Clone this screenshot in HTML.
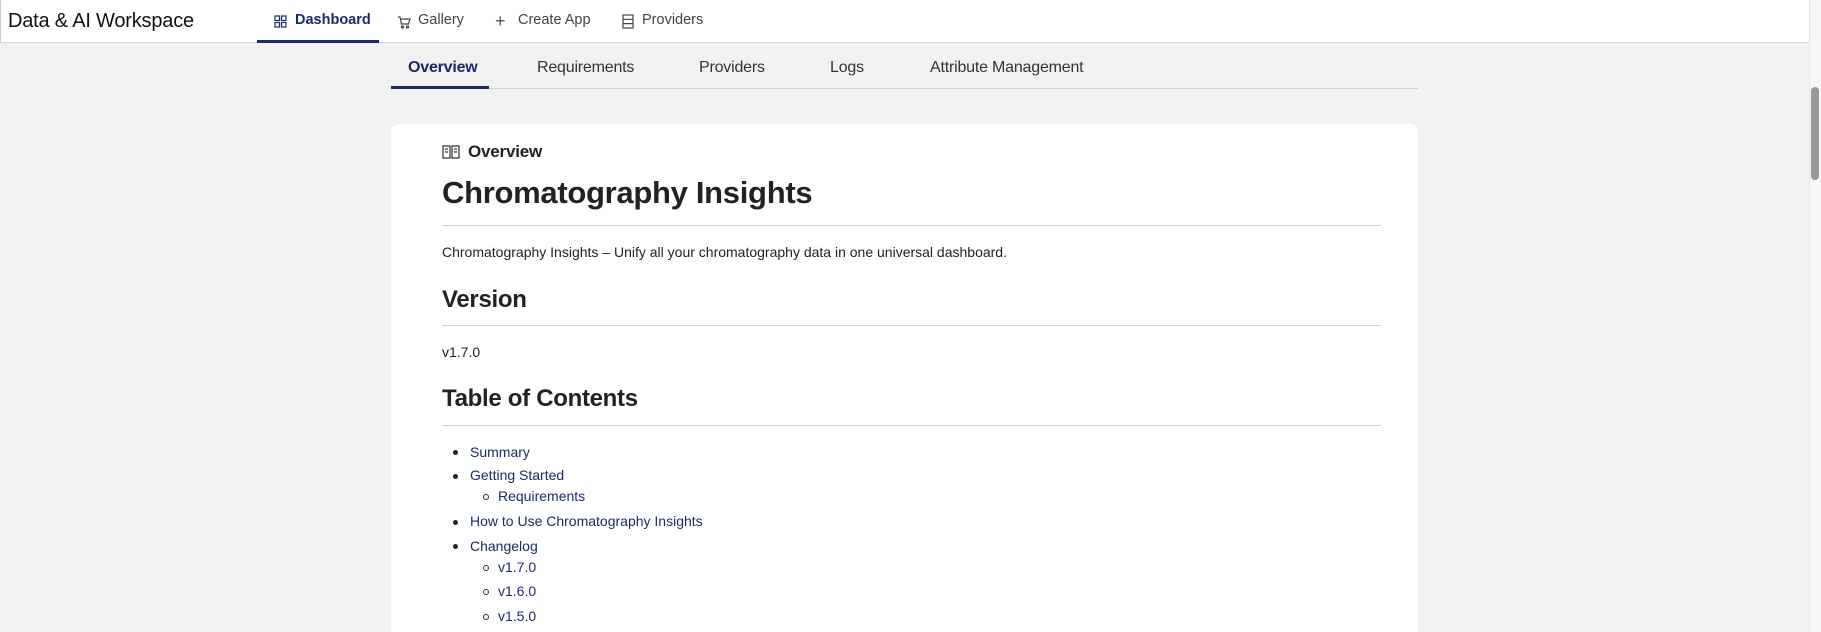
<!DOCTYPE html>
<html><head><meta charset="utf-8"><style>
*{margin:0;padding:0;box-sizing:border-box}
html,body{width:1821px;height:632px;overflow:hidden}
body{background:#f2f2f2;font-family:"Liberation Sans",Arial,sans-serif;color:#222;position:relative}
.a{position:absolute;white-space:nowrap}
#hdr{position:absolute;left:0;top:0;width:1809px;height:43px;background:#fff;border-bottom:1px solid #d6d6d6;border-left:1px solid #ccc}
.nav{font-size:14.5px;color:#444;top:12px}
.tab{font-size:16px;color:#333;top:59px;letter-spacing:-0.2px}
.li{font-size:14px;color:#1b2a6b}
.b{position:absolute;width:5px;height:5px;border-radius:50%;background:#222}
.c{position:absolute;width:6px;height:6px;border-radius:50%;border:1px solid #333}
.hr{position:absolute;left:442px;width:939px;height:1px;background:#d0d0d0}
</style></head><body>
<div id="hdr"></div>
<div class="a" style="left:8px;top:10px;font-size:20px;color:#111;letter-spacing:-0.2px">Data &amp; AI Workspace</div>
<svg class="a" style="left:274px;top:15px" width="13" height="13" viewBox="0 0 13 13" fill="none" stroke="#1b2a6b" stroke-width="1.2"><rect x="1" y="1" width="4.5" height="4.5"/><rect x="7.5" y="1" width="4.5" height="4.5"/><rect x="1" y="7.5" width="4.5" height="4.5"/><rect x="7.5" y="7.5" width="4.5" height="4.5"/></svg>
<div class="a nav" style="left:295px;color:#1b2a6b;font-weight:bold">Dashboard</div>
<div class="a" style="left:257px;top:40px;width:122px;height:3px;background:#1b2a6b"></div>
<svg class="a" style="left:397px;top:15px" width="14" height="14" viewBox="0 0 14 14" fill="none" stroke="#444" stroke-width="1.2"><path d="M1 2h2l1.5 7h7l1.5-5H4"/><circle cx="5.5" cy="12" r="1"/><circle cx="10.5" cy="12" r="1"/></svg>
<div class="a nav" style="left:418px">Gallery</div>
<div class="a" style="left:495px;top:11px;font-size:18px;color:#555">+</div>
<div class="a nav" style="left:518px">Create App</div>
<svg class="a" style="left:622px;top:14px" width="12" height="15" viewBox="0 0 12 15" fill="none" stroke="#444" stroke-width="1.2"><rect x="1" y="1" width="10" height="13"/><path d="M1 5.3h10M1 9.6h10"/></svg>
<div class="a nav" style="left:642px">Providers</div>

<div class="a tab" style="left:408px;color:#1b2a6b;font-weight:bold">Overview</div>
<div class="a tab" style="left:537px">Requirements</div>
<div class="a tab" style="left:699px">Providers</div>
<div class="a tab" style="left:830px">Logs</div>
<div class="a tab" style="left:930px">Attribute Management</div>
<div class="a" style="left:391px;top:88px;width:1027px;height:1px;background:#d0d0d0"></div>
<div class="a" style="left:391px;top:86px;width:98px;height:3px;background:#1b2a6b"></div>

<div class="a" style="left:391px;top:124px;width:1027px;height:520px;background:#fff;border-radius:8px"></div>
<svg class="a" style="left:442px;top:145px" width="18" height="14" viewBox="0 0 18 14" fill="none" stroke="#333" stroke-width="1.2"><path d="M1 1h7v12H1zM10 1h7v12h-7zM3 4h3M3 7h3M12 4h3M12 7h3"/></svg>
<div class="a" style="left:468px;top:142px;font-size:17px;font-weight:bold;color:#222;letter-spacing:-0.2px">Overview</div>
<div class="a" style="left:442px;top:175px;font-size:31px;font-weight:bold;color:#222;letter-spacing:-0.3px">Chromatography Insights</div>
<div class="hr" style="top:225px"></div>
<div class="a" style="left:442px;top:244px;font-size:14px">Chromatography Insights – Unify all your chromatography data in one universal dashboard.</div>
<div class="a" style="left:442px;top:286px;font-size:24px;font-weight:bold;letter-spacing:-0.3px">Version</div>
<div class="hr" style="top:325px"></div>
<div class="a" style="left:442px;top:344px;font-size:14px">v1.7.0</div>
<div class="a" style="left:442px;top:385px;font-size:24px;font-weight:bold;letter-spacing:-0.3px">Table of Contents</div>
<div class="hr" style="top:425px"></div>

<div class="b" style="left:453px;top:450px"></div><div class="a li" style="left:470px;top:444px">Summary</div>
<div class="b" style="left:453px;top:474px"></div><div class="a li" style="left:470px;top:467px">Getting Started</div>
<div class="c" style="left:483px;top:494px"></div><div class="a li" style="left:498px;top:488px">Requirements</div>
<div class="b" style="left:453px;top:520px"></div><div class="a li" style="left:470px;top:513px">How to Use Chromatography Insights</div>
<div class="b" style="left:453px;top:544px"></div><div class="a li" style="left:470px;top:538px">Changelog</div>
<div class="c" style="left:483px;top:565px"></div><div class="a li" style="left:498px;top:559px">v1.7.0</div>
<div class="c" style="left:483px;top:589px"></div><div class="a li" style="left:498px;top:583px">v1.6.0</div>
<div class="c" style="left:483px;top:614px"></div><div class="a li" style="left:498px;top:608px">v1.5.0</div>

<div class="a" style="left:1809px;top:0;width:12px;height:632px;background:#f6f6f6;border-left:1px solid #e4e4e4"></div>
<div class="a" style="left:1811px;top:87px;width:8px;height:93px;background:#999;border-radius:4px"></div>
</body></html>
